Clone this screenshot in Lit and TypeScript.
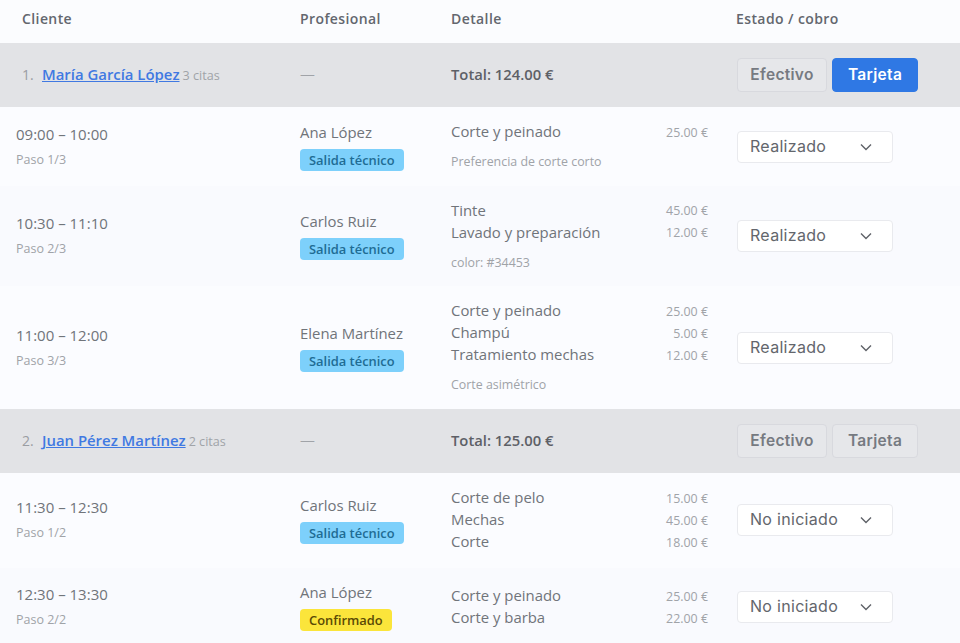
import { LitElement, html, css } from 'lit';
import { customElement } from 'lit/decorators.js';

interface Service {
  name: string;
  price: string;
}

interface Appointment {
  time: string;
  step: string;
  pro: string;
  badge: string;
  badgeType: 'tech' | 'ok';
  services: Service[];
  note?: string;
  status: string;
}

interface Group {
  index: number;
  name: string;
  count: string;
  total: string;
  paid?: boolean;
  rows: Appointment[];
}

const GROUPS: Group[] = [
  {
    index: 1,
    name: 'María García López',
    count: '3 citas',
    total: 'Total: 124.00 €',
    paid: true,
    rows: [
      {
        time: '09:00 – 10:00',
        step: 'Paso 1/3',
        pro: 'Ana López',
        badge: 'Salida técnico',
        badgeType: 'tech',
        services: [{ name: 'Corte y peinado', price: '25.00 €' }],
        note: 'Preferencia de corte corto',
        status: 'Realizado',
      },
      {
        time: '10:30 – 11:10',
        step: 'Paso 2/3',
        pro: 'Carlos Ruiz',
        badge: 'Salida técnico',
        badgeType: 'tech',
        services: [
          { name: 'Tinte', price: '45.00 €' },
          { name: 'Lavado y preparación', price: '12.00 €' },
        ],
        note: 'color: #34453',
        status: 'Realizado',
      },
      {
        time: '11:00 – 12:00',
        step: 'Paso 3/3',
        pro: 'Elena Martínez',
        badge: 'Salida técnico',
        badgeType: 'tech',
        services: [
          { name: 'Corte y peinado', price: '25.00 €' },
          { name: 'Champú', price: '5.00 €' },
          { name: 'Tratamiento mechas', price: '12.00 €' },
        ],
        note: 'Corte asimétrico',
        status: 'Realizado',
      },
    ],
  },
  {
    index: 2,
    name: 'Juan Pérez Martínez',
    count: '2 citas',
    total: 'Total: 125.00 €',
    rows: [
      {
        time: '11:30 – 12:30',
        step: 'Paso 1/2',
        pro: 'Carlos Ruiz',
        badge: 'Salida técnico',
        badgeType: 'tech',
        services: [
          { name: 'Corte de pelo', price: '15.00 €' },
          { name: 'Mechas', price: '45.00 €' },
          { name: 'Corte', price: '18.00 €' },
        ],
        status: 'No iniciado',
      },
      {
        time: '12:30 – 13:30',
        step: 'Paso 2/2',
        pro: 'Ana López',
        badge: 'Confirmado',
        badgeType: 'ok',
        services: [
          { name: 'Corte y peinado', price: '25.00 €' },
          { name: 'Corte y barba', price: '22.00 €' },
        ],
        status: 'No iniciado',
      },
    ],
  },
];

@customElement('app-root')
export class AppRoot extends LitElement {
  static styles = css`
    :host {
      display: block;
      height: 643px;
      overflow: hidden;
      background: #fbfcfe;
      font-family: 'Open Sans', sans-serif;
      font-size: 14.9px;
      color: #70747a;
    }

    .line {
      display: grid;
      grid-template-columns: 300px 151px 286px 1fr;
      align-items: center;
    }

    .head {
      height: 43px;
      padding-bottom: 6px;
      box-sizing: border-box;
      font-size: 14px;
      font-weight: 600;
      letter-spacing: 0.4px;
      color: #63676e;
    }

    .head .first {
      padding-left: 22px;
    }

    .head .last {
      margin-left: -1px;
    }

    .group {
      box-sizing: border-box;
      height: 64px;
      padding-bottom: 2px;
      background: #e2e3e6;
    }

    .group .first {
      padding-left: 22px;
      display: flex;
      align-items: baseline;
    }

    .num {
      width: 20px;
      color: #9a9da2;
      font-size: 14px;
    }

    .client {
      color: #4079e2;
      font-weight: 600;
      font-size: 14.9px;
      text-decoration: underline;
    }

    .count {
      margin-left: 3px;
      font-size: 12.6px;
      color: #a0a3a8;
    }

    .dash {
      color: #a0a3a8;
    }

    .total {
      font-weight: 600;
      font-size: 14.8px;
      color: #5d6066;
    }

    .pay {
      display: flex;
      gap: 5px;
      margin-top: 2px;
    }

    .btn {
      box-sizing: border-box;
      height: 34px;
      padding-bottom: 1px;
      display: flex;
      align-items: center;
      justify-content: center;
      border: 1px solid #d8d9de;
      border-radius: 4px;
      background: #e6e7ea;
      color: #767a81;
      font-family: 'Inter', sans-serif;
      font-size: 15.5px;
      letter-spacing: 0.3px;
      font-weight: 600;
    }

    .btn.cash {
      width: 90px;
    }

    .btn.card {
      width: 86px;
    }

    .btn.on {
      background: #2f78e4;
      border-color: #2f78e4;
      color: #fff;
    }

    .row {
      padding: 13px 0 16px;
      background: #fbfcff;
    }

    .row.alt {
      background: #f9fafe;
    }

    .row.noted {
      padding-bottom: 14.7px;
    }

    .row .first {
      padding-left: 16px;
    }

    .time {
      font-size: 15px;
      line-height: 22px;
    }

    .step {
      margin-top: 6px;
      font-size: 12.5px;
      line-height: 18px;
      color: #a0a3a8;
    }

    .pro {
      line-height: 22px;
    }

    .badge {
      display: inline-block;
      margin-top: 6px;
      padding: 0 9px;
      height: 22px;
      line-height: 22px;
      border-radius: 4px;
      font-size: 12.9px;
      font-weight: 600;
      vertical-align: top;
    }

    .badge.tech {
      background: #7dd0fb;
      color: #1f6c94;
    }

    .badge.ok {
      background: #fbe53b;
      color: #5a4a05;
    }

    .detail {
      padding-right: 29px;
    }

    .svc {
      display: flex;
      justify-content: space-between;
      align-items: center;
      line-height: 22px;
    }

    .price {
      margin-top: 3px;
      font-size: 12.4px;
      line-height: 18px;
      color: #a0a3a8;
    }

    .note {
      margin-top: 11px;
      font-size: 12.4px;
      line-height: 18px;
      color: #a0a3a8;
    }

    .status {
      padding-top: 2px;
    }

    .select {
      box-sizing: border-box;
      width: 156px;
      height: 32px;
      padding: 0 20px 2px 12px;
      display: flex;
      align-items: center;
      justify-content: space-between;
      background: #fff;
      border: 1px solid #e9eaee;
      border-radius: 4px;
      font-family: 'Inter', sans-serif;
      font-size: 16px;
      letter-spacing: 0.3px;
      color: #63666c;
    }

    .select svg {
      display: block;
      margin-top: 2px;
    }
  `;

  renderRow(row: Appointment, i: number) {
    return html`
      <div class="line row ${i % 2 ? 'alt' : ''} ${row.note ? 'noted' : ''}">
        <div class="first">
          <div class="time">${row.time}</div>
          <div class="step">${row.step}</div>
        </div>
        <div>
          <div class="pro">${row.pro}</div>
          <span class="badge ${row.badgeType}">${row.badge}</span>
        </div>
        <div class="detail">
          ${row.services.map(s => html`
            <div class="svc"><span>${s.name}</span><span class="price">${s.price}</span></div>
          `)}
          ${row.note ? html`<div class="note">${row.note}</div>` : ''}
        </div>
        <div class="status">
          <div class="select">
            <span>${row.status}</span>
            <svg width="12" height="8" viewBox="0 0 12 8" fill="none" stroke="#5f6268" stroke-width="1.4">
              <path d="M1 1.5l5 5 5-5" />
            </svg>
          </div>
        </div>
      </div>
    `;
  }

  renderGroup(group: Group) {
    return html`
      <div class="line group">
        <div class="first">
          <span class="num">${group.index}.</span>
          <a class="client">${group.name}</a>
          <span class="count">${group.count}</span>
        </div>
        <div class="dash">—</div>
        <div class="total">${group.total}</div>
        <div class="pay">
          <div class="btn cash">Efectivo</div>
          <div class="btn card ${group.paid ? 'on' : ''}">Tarjeta</div>
        </div>
      </div>
      ${group.rows.map((r, i) => this.renderRow(r, i))}
    `;
  }

  render() {
    return html`
      <div class="line head">
        <div class="first">Cliente</div>
        <div>Profesional</div>
        <div>Detalle</div>
        <div class="last">Estado / cobro</div>
      </div>
      ${GROUPS.map(g => this.renderGroup(g))}
    `;
  }
}
